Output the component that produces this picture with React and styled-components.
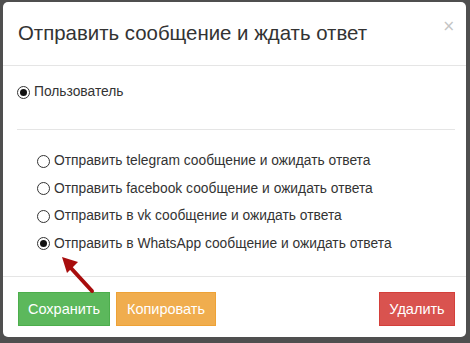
import React from 'react';
import styled, { createGlobalStyle } from 'styled-components';

const Global = createGlobalStyle`
  html, body {
    margin: 0;
    padding: 0;
    background: #4f4f4f;
    font-family: 'Liberation Sans', Arial, sans-serif;
    color: #333;
  }
`;

const Backdrop = styled.div`
  width: 470px;
  height: 343px;
  padding: 2px 4px 6px 3px;
  box-sizing: border-box;
  background: #4f4f4f;
`;

const Modal = styled.div`
  position: relative;
  height: 100%;
  background: #fff;
  border-radius: 5px;
  display: flex;
  flex-direction: column;
`;

const Header = styled.div`
  height: 63px;
  padding: 0 11px 0 15px;
  display: flex;
  align-items: center;
  justify-content: space-between;
  border-bottom: 1px solid #e5e5e5;
`;

const Title = styled.h4`
  margin: 0;
  font-size: 20.4px;
  font-weight: 400;
  color: #333;
`;

const Close = styled.span`
  align-self: flex-start;
  margin-top: 15px;
  font-size: 15px;
  color: #c4c4c4;
  font-family: 'DejaVu Sans', sans-serif;
`;

const Body = styled.div`
  flex: 1;
  padding: 0 11px 0 14px;
`;

const Section = styled.div`
  padding: ${({ $top }) => $top}px 0 ${({ $bottom }) => $bottom}px ${({ $indent }) => $indent}px;
  border-bottom: ${({ $line }) => ($line ? '1px solid #e5e5e5' : 'none')};
  display: flex;
  flex-direction: column;
  gap: 9.6px;
`;

const Option = styled.label`
  display: flex;
  align-items: center;
  gap: 4px;
  font-size: 13.8px;
  line-height: 18px;
  color: #333;
`;

const Radio = styled.span`
  width: 13px;
  height: 13px;
  border-radius: 50%;
  border: 1px solid #333;
  box-sizing: border-box;
  display: inline-flex;
  align-items: center;
  justify-content: center;
  flex: none;
  &::after {
    content: '';
    width: 7px;
    height: 7px;
    border-radius: 50%;
    background: ${({ $checked }) => ($checked ? '#111' : 'transparent')};
  }
`;

const Footer = styled.div`
  height: 61px;
  padding: 15px 11px 0 15px;
  box-sizing: border-box;
  border-top: 1px solid #e5e5e5;
  display: flex;
  align-items: flex-start;
  gap: 6px;
`;

const colors = {
  green: ['#5cb85c', '#4cae4c'],
  orange: ['#f0ad4e', '#eea236'],
  red: ['#d9534f', '#d43f3a'],
};

const Button = styled.button`
  height: 34px;
  width: ${({ $w }) => $w}px;
  padding: 0;
  border: 1px solid ${({ $color }) => colors[$color][1]};
  background: ${({ $color }) => colors[$color][0]};
  color: #fff;
  font-family: 'Liberation Sans', Arial, sans-serif;
  font-size: 14.5px;
  border-radius: 0;
  margin-left: ${({ $push }) => ($push ? 'auto' : '0')};
`;

const Arrow = styled.svg`
  position: absolute;
  left: 50px;
  top: 248px;
`;

export default function App() {
  const channels = ['telegram', 'facebook', 'в vk', 'в WhatsApp'];
  return (
    <Backdrop>
      <Global />
      <Modal>
        <Header>
          <Title>Отправить сообщение и ждать ответ</Title>
          <Close>×</Close>
        </Header>
        <Body>
          <Section $top={17} $bottom={28} $indent={0} $line>
            <Option>
              <Radio $checked />
              Пользователь
            </Option>
          </Section>
          <Section $top={22} $bottom={0} $indent={20}>
            {channels.map((c, i) => (
              <Option key={c}>
                <Radio $checked={i === 3} />
                Отправить {c} сообщение и ожидать ответа
              </Option>
            ))}
          </Section>
        </Body>
        <Footer>
          <Button $color="green" $w={92}>Сохранить</Button>
          <Button $color="orange" $w={100}>Копировать</Button>
          <Button $color="red" $w={76} $push>Удалить</Button>
        </Footer>
        <Arrow width="45" height="45" viewBox="0 0 45 45">
          <path d="M39 41 L17 17" stroke="#a80d0d" strokeWidth="4" strokeLinecap="round" />
          <path d="M9 7 L25 12 L14 23 Z" fill="#a80d0d" />
        </Arrow>
      </Modal>
    </Backdrop>
  );
}
